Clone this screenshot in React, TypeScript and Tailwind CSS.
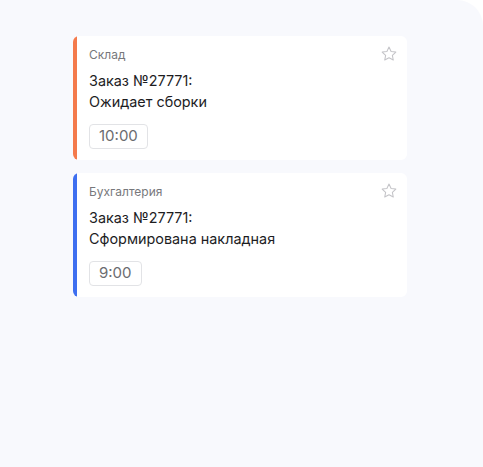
import React from "react";

type Notice = {
	id: number;
	source: string;
	title: string;
	status: string;
	time: string;
	accent: string;
};

const notices: Notice[] = [
	{ id: 1, source: "Склад", title: "Заказ №27771:", status: "Ожидает сборки", time: "10:00", accent: "bg-[#f47a4c]" },
	{ id: 2, source: "Бухгалтерия", title: "Заказ №27771:", status: "Сформирована накладная", time: "9:00", accent: "bg-[#3e6ff0]" },
];

const StarIcon = () => (
	<svg width="18" height="18" viewBox="0 0 24 24" fill="none" stroke="#c4c4c8" strokeWidth="1.4" strokeLinejoin="round">
		<path d="M12 2.8l2.8 5.8 6.3.8-4.6 4.4 1.2 6.3L12 17.1l-5.7 3 1.2-6.3-4.6-4.4 6.3-.8z" />
	</svg>
);

const NoticeCard: React.FC<{ notice: Notice }> = ({ notice }) => (
	<div className="flex rounded-[6px] bg-white overflow-hidden">
		<div className={`w-[4px] shrink-0 ${notice.accent}`} />
		<div className="relative flex-1 pl-[12px] pr-[11px] pt-[10px] pb-[11px]">
			<p className="text-[12px] leading-[18px] text-[#77787c]">{notice.source}</p>
			<p className="mt-[6px] text-[14.4px] leading-[21px] text-[#1d1d1f]">
				{notice.title}
				<br />
				{notice.status}
			</p>
			<div className="mt-[12px] inline-flex h-[25px] items-center rounded-[4px] border border-[#e2e3e6] px-[9px] text-[15px] text-[#6b6c70]">
				{notice.time}
			</div>
			<button className="absolute right-[9px] top-[9px]">
				<StarIcon />
			</button>
		</div>
	</div>
);

export default function App() {
	return (
		<div className="h-[467px] w-[483px] bg-white font-['Inter','Noto_Sans',sans-serif]">
			<div className="h-full w-full rounded-tr-[26px] bg-[#f8f9fd] pt-[36px] pl-[73px]">
				<div className="flex w-[334px] flex-col gap-[13px]">
					{notices.map((n) => (
						<NoticeCard key={n.id} notice={n} />
					))}
				</div>
			</div>
		</div>
	);
}
